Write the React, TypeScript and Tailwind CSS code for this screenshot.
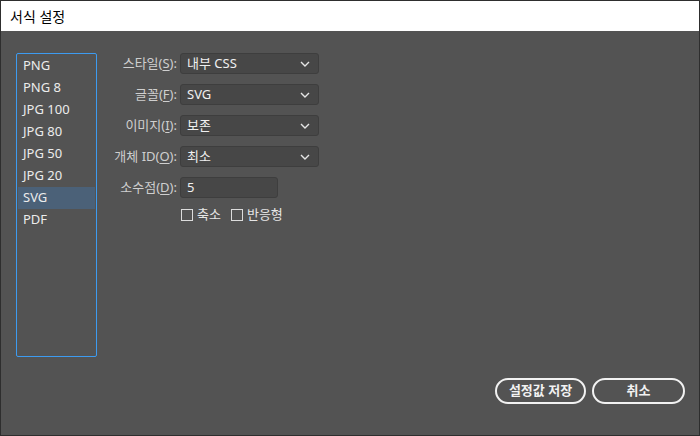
import React from "react";

const font = { fontFamily: '"Noto Sans", "Noto Sans CJK KR", sans-serif' };

const formats = ["PNG", "PNG 8", "JPG 100", "JPG 80", "JPG 50", "JPG 20", "SVG", "PDF"];

const Chevron = () => (
  <svg width="10" height="6" viewBox="0 0 10 6" className="shrink-0">
    <path d="M1 1l4 4 4-4" fill="none" stroke="#e6e6e6" strokeWidth="1.4" />
  </svg>
);

const Label = ({ text, mn }: { text: string; mn: string }) => (
  <div className="w-[83px] shrink-0 whitespace-nowrap pr-[3px] text-right text-[13px] text-[#cfcfcf] leading-none">
    {text}(<span className="underline underline-offset-2">{mn}</span>):
  </div>
);

const Select = ({ value }: { value: string }) => (
  <div className="flex h-[21px] w-[139px] items-center justify-between rounded-[3px] border border-[#3e3e3e] bg-[#474747] pl-[6px] pr-[8px] text-[13px] text-[#f0f0f0]">
    <span>{value}</span>
    <Chevron />
  </div>
);

const rows = [
  { text: "스타일", mn: "S", value: "내부 CSS" },
  { text: "글꼴", mn: "F", value: "SVG" },
  { text: "이미지", mn: "I", value: "보존" },
  { text: "개체 ID", mn: "O", value: "최소" },
];

export default function App() {
  return (
    <div style={font} className="flex h-[436px] w-[700px] flex-col border border-[#2e2e2e] bg-[#535353]">
      {/* Title bar */}
      <div className="flex h-[30px] items-center bg-white pl-[9px] text-[14px] text-black">서식 설정</div>

      <div className="flex flex-1 flex-col">
        <div className="flex pt-[22px]">
          {/* Format list */}
          <div className="ml-[15px] h-[304px] w-[81px] shrink-0 rounded-[2px] border border-[#3d9bf0] p-[1px]">
            {formats.map((f) => (
              <div
                key={f}
                className={`flex h-[22px] items-center pl-[5px] text-[13px] text-[#ececec] ${
                  f === "SVG" ? "bg-[#4b6178]" : ""
                }`}
              >
                {f}
              </div>
            ))}
          </div>

          {/* Options */}
          <div className="flex flex-col gap-[10px]">
            {rows.map((r) => (
              <div key={r.mn} className="flex items-center">
                <Label text={r.text} mn={r.mn} />
                <Select value={r.value} />
              </div>
            ))}
            <div className="flex items-center">
              <Label text="소수점" mn="D" />
              <div className="flex h-[21px] w-[98px] items-center rounded-[3px] border border-[#3e3e3e] bg-[#474747] pl-[6px] text-[13px] text-[#f0f0f0]">
                5
              </div>
            </div>
            <div className="-mt-[3px] flex items-center pl-[84px] text-[13px] text-[#e6e6e6]">
              <span className="h-[12px] w-[12px] border border-[#dcdcdc]" />
              <span className="ml-[4px]">축소</span>
              <span className="ml-[10px] h-[12px] w-[12px] border border-[#dcdcdc]" />
              <span className="ml-[4px]">반응형</span>
            </div>
          </div>
        </div>

        {/* Buttons */}
        <div className="mt-[21px] flex justify-end gap-[6px] pr-[14px]">
          <button className="h-[26px] w-[91px] rounded-full border-2 border-[#f2f2f2] text-[13px] font-bold text-[#f2f2f2]">
            설정값 저장
          </button>
          <button className="h-[26px] w-[93px] rounded-full border-2 border-[#f2f2f2] text-[13px] font-bold text-[#f2f2f2]">
            취소
          </button>
        </div>
      </div>
    </div>
  );
}
